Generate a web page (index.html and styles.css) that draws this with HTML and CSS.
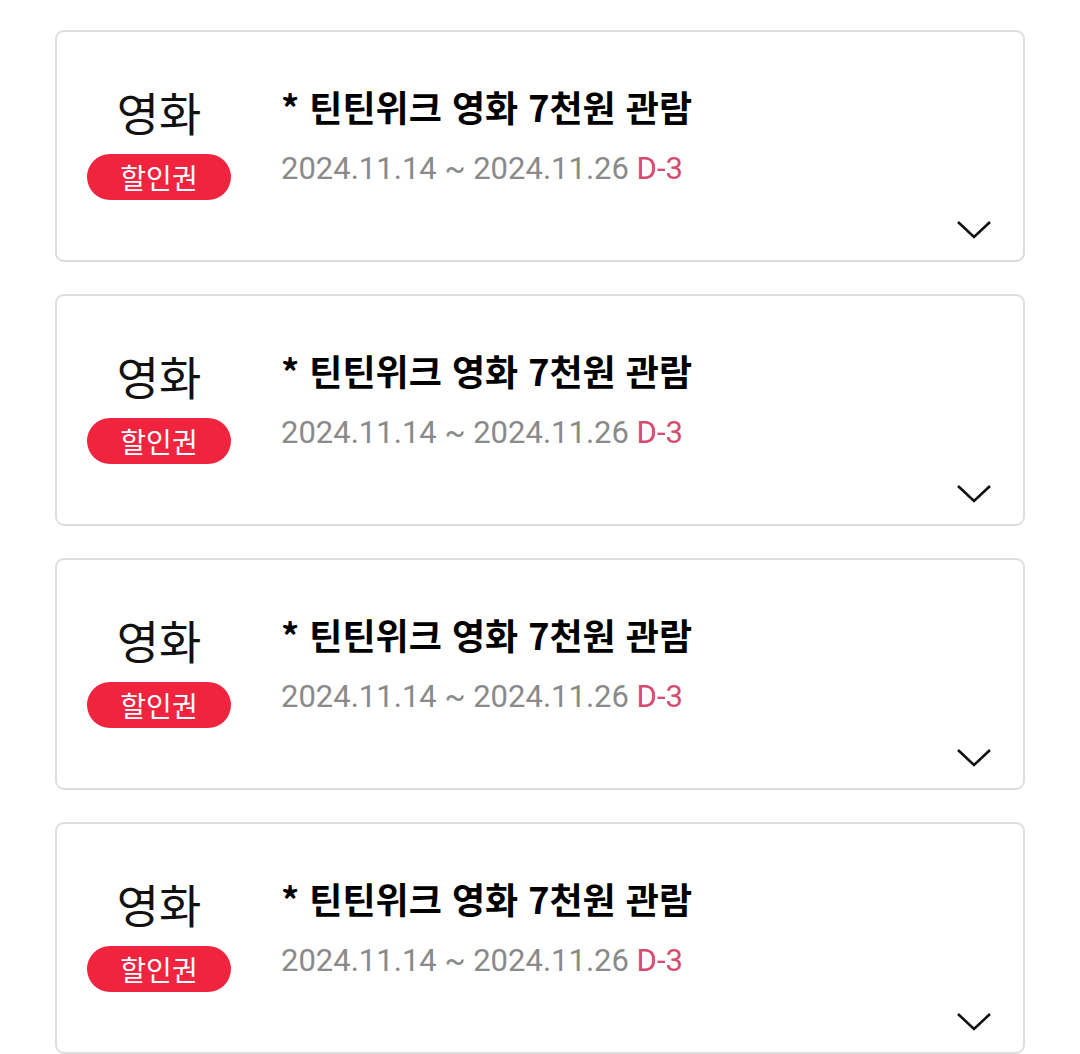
FILE: index.html
```html
<!DOCTYPE html>
<html lang="ko">
<head>
  <meta charset="UTF-8">
  <meta name="viewport" content="width=device-width, initial-scale=1.0">
  <title>쿠폰함</title>
  <link rel="stylesheet" href="styles.css">
</head>
<body>
  <div class="coupon-list">
    <div class="coupon">
      <div class="coupon-type">
        <div class="category">영화</div>
        <span class="badge">할인권</span>
      </div>
      <div class="coupon-info">
        <div class="title">* 틴틴위크 영화 7천원 관람</div>
        <div class="period">2024.11.14 ~ 2024.11.26 <span class="dday">D-3</span></div>
      </div>
      <svg class="chevron" width="36" height="20" viewBox="0 0 36 20"><path d="M2 2 L18 17 L34 2" fill="none" stroke="#111" stroke-width="2.6"/></svg>
    </div>

    <div class="coupon">
      <div class="coupon-type">
        <div class="category">영화</div>
        <span class="badge">할인권</span>
      </div>
      <div class="coupon-info">
        <div class="title">* 틴틴위크 영화 7천원 관람</div>
        <div class="period">2024.11.14 ~ 2024.11.26 <span class="dday">D-3</span></div>
      </div>
      <svg class="chevron" width="36" height="20" viewBox="0 0 36 20"><path d="M2 2 L18 17 L34 2" fill="none" stroke="#111" stroke-width="2.6"/></svg>
    </div>

    <div class="coupon">
      <div class="coupon-type">
        <div class="category">영화</div>
        <span class="badge">할인권</span>
      </div>
      <div class="coupon-info">
        <div class="title">* 틴틴위크 영화 7천원 관람</div>
        <div class="period">2024.11.14 ~ 2024.11.26 <span class="dday">D-3</span></div>
      </div>
      <svg class="chevron" width="36" height="20" viewBox="0 0 36 20"><path d="M2 2 L18 17 L34 2" fill="none" stroke="#111" stroke-width="2.6"/></svg>
    </div>

    <div class="coupon">
      <div class="coupon-type">
        <div class="category">영화</div>
        <span class="badge">할인권</span>
      </div>
      <div class="coupon-info">
        <div class="title">* 틴틴위크 영화 7천원 관람</div>
        <div class="period">2024.11.14 ~ 2024.11.26 <span class="dday">D-3</span></div>
      </div>
      <svg class="chevron" width="36" height="20" viewBox="0 0 36 20"><path d="M2 2 L18 17 L34 2" fill="none" stroke="#111" stroke-width="2.6"/></svg>
    </div>
  </div>
</body>
</html>
```

FILE: styles.css
```css
body {
  margin: 0;
  padding: 0;
  background: #fff;
  font-family: "Noto Sans CJK KR", "Noto Sans", sans-serif;
  overflow: hidden;
}

.coupon-list {
  display: flex;
  flex-direction: column;
  gap: 32px;
  padding: 30px 55px 0 55px;
}

.coupon {
  display: grid;
  grid-template-columns: 144px 1fr auto;
  column-gap: 50px;
  height: 232px;
  box-sizing: border-box;
  border: 2px solid #dedede;
  border-radius: 9px;
  padding: 51px 31px 0 30px;
}

.coupon-type {
  display: flex;
  flex-direction: column;
  align-items: center;
}

.category {
  font-size: 46px;
  line-height: 56px;
  color: #111;
}

.badge {
  margin-top: 15px;
  width: 144px;
  height: 46px;
  border-radius: 23px;
  background: #f0243f;
  color: #fff;
  font-size: 28px;
  line-height: 46px;
  text-align: center;
}

.coupon-info {
  display: flex;
  flex-direction: column;
}

.title {
  font-size: 36px;
  font-weight: bold;
  line-height: 46px;
  color: #000;
}

.period {
  margin-top: 22px;
  font-family: Roboto, "Noto Sans CJK KR", sans-serif;
  font-size: 31px;
  line-height: 36px;
  color: #8a8a8a;
}

.dday {
  color: #d84a70;
}

.chevron {
  align-self: end;
  margin-bottom: 20px;
}
```
